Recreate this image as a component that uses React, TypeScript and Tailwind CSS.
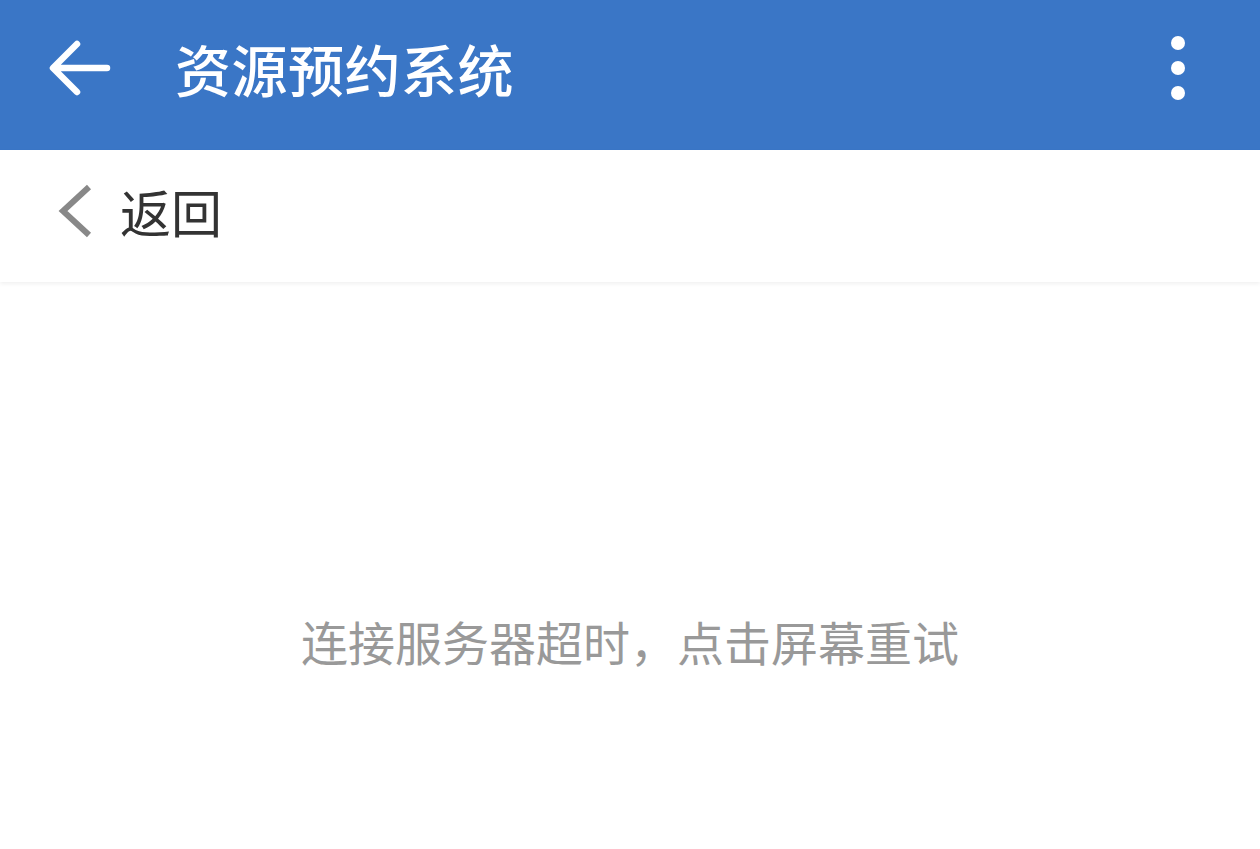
import { useState } from "react";

const cjk = { fontFamily: '"Noto Sans CJK SC", "Noto Sans", sans-serif' };

export default function App() {
  const [tries, setTries] = useState(0);

  return (
    <div className="flex h-[849px] w-[1260px] flex-col overflow-hidden bg-white" style={cjk}>
      {/* app bar */}
      <header className="flex h-[150px] shrink-0 items-center bg-[#3a76c6] pb-[14px] pl-[48px] pr-[75px] text-white">
        <svg width="64" height="58" viewBox="0 0 64 58" fill="none" stroke="white" strokeWidth="6.5" strokeLinecap="round" strokeLinejoin="round">
          <path d="M59 29H6M29 5L5 29l24 24" />
        </svg>
        <h1 className="ml-[63px] text-[56px] leading-none font-medium tracking-[0.5px]">资源预约系统</h1>
        <div className="ml-auto flex flex-col items-center gap-[11px]">
          <span className="size-[14px] rounded-full bg-white" />
          <span className="size-[14px] rounded-full bg-white" />
          <span className="size-[14px] rounded-full bg-white" />
        </div>
      </header>

      {/* back bar */}
      <div className="relative z-10 flex h-[132px] shrink-0 items-center bg-white pb-[10px] pl-[57px] shadow-[0_2px_4px_rgba(0,0,0,0.06)]">
        <svg width="36" height="54" viewBox="0 0 36 54" fill="none" stroke="#888888" strokeWidth="6">
          <path d="M32 3L6 27l26 24" />
        </svg>
        <span className="ml-[27px] text-[51px] leading-none text-[#333333]">返回</span>
      </div>

      {/* error state */}
      <button
        type="button"
        onClick={() => setTries(tries + 1)}
        className="flex flex-1 items-start justify-center bg-white pt-[335px]"
      >
        <span className="text-[47px] leading-none text-[#999999]">连接服务器超时，点击屏幕重试</span>
      </button>
    </div>
  );
}
